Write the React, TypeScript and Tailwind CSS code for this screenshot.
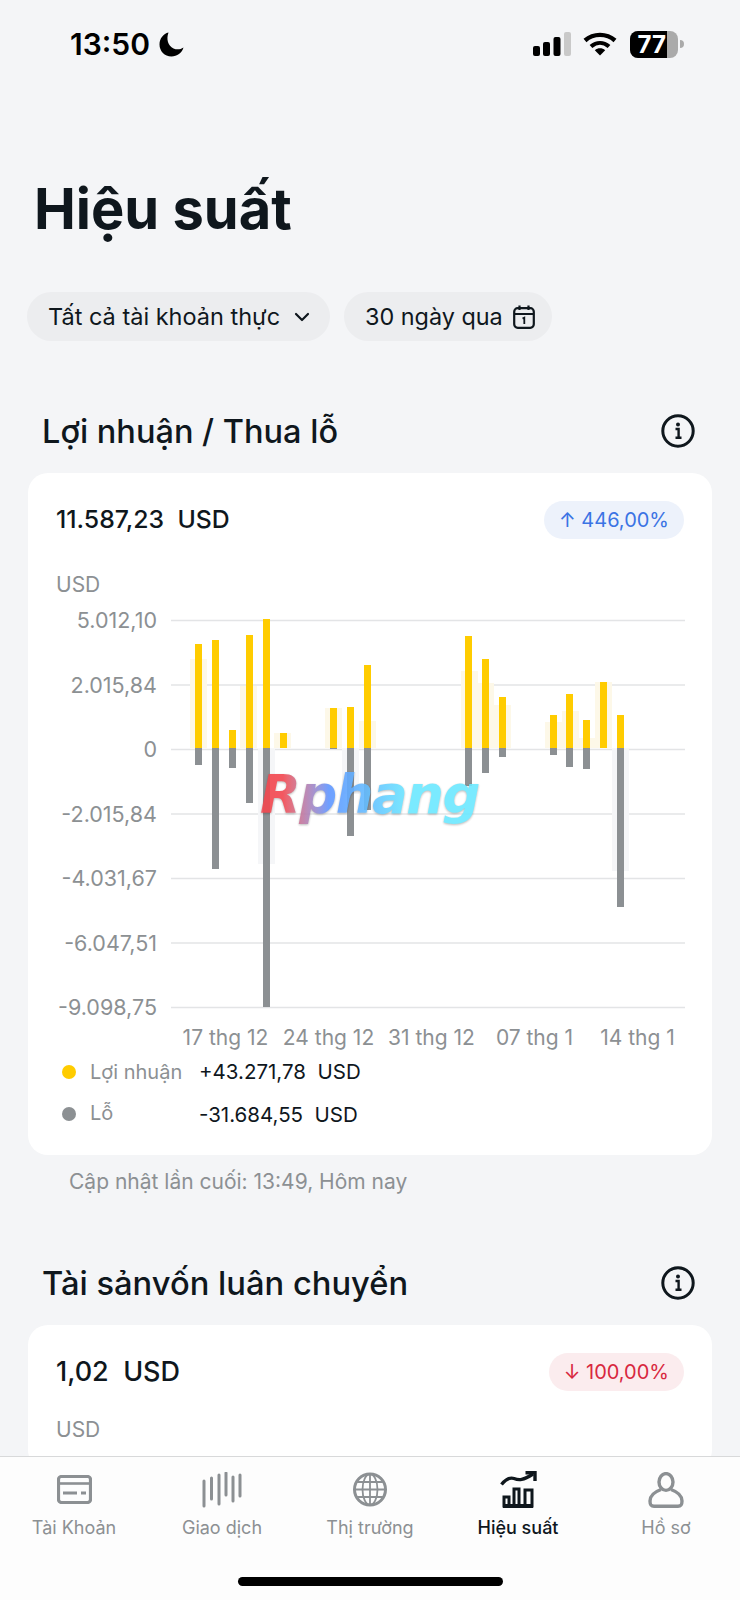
import { ChevronDown } from "lucide-react"

type Bar = { x: number; top: number; bottom?: number }
type Ghost = { x: number; y: number; h: number; neg?: boolean }

const GRID_YS = [620.5, 685, 749.5, 814, 878.5, 943, 1007.5]
const Y_LABELS = ["5.012,10", "2.015,84", "0", "-2.015,84", "-4.031,67", "-6.047,51", "-9.098,75"]
const X_LABELS = ["17 thg 12", "24 thg 12", "31 thg 12", "07 thg 1", "14 thg 1"]

const BARS: Bar[] = [
  { x: 195, top: 644, bottom: 765 },
  { x: 212, top: 640, bottom: 869 },
  { x: 229, top: 730, bottom: 768 },
  { x: 246, top: 635, bottom: 803 },
  { x: 263, top: 619, bottom: 1007 },
  { x: 280, top: 733 },
  { x: 330, top: 708, bottom: 749 },
  { x: 347, top: 707, bottom: 836 },
  { x: 364, top: 665, bottom: 810 },
  { x: 465, top: 636, bottom: 786 },
  { x: 482, top: 659, bottom: 773 },
  { x: 499, top: 697, bottom: 757 },
  { x: 550, top: 715, bottom: 755 },
  { x: 566, top: 694, bottom: 767 },
  { x: 583, top: 720, bottom: 769 },
  { x: 600, top: 682 },
  { x: 617, top: 715, bottom: 907 },
]

const GHOSTS: Ghost[] = [
  { x: 190, y: 659, h: 89 },
  { x: 240, y: 686, h: 62 },
  { x: 258, y: 749, h: 115, neg: true },
  { x: 274, y: 733, h: 15 },
  { x: 325, y: 708, h: 40 },
  { x: 342, y: 749, h: 45, neg: true },
  { x: 359, y: 721, h: 27 },
  { x: 461, y: 671, h: 77 },
  { x: 477, y: 683, h: 65 },
  { x: 494, y: 705, h: 43 },
  { x: 545, y: 722, h: 26 },
  { x: 562, y: 711, h: 37 },
  { x: 579, y: 738, h: 10 },
  { x: 595, y: 682, h: 66 },
  { x: 612, y: 749, h: 122, neg: true },
]

function StatusIcons() {
  return (
    <div className="flex items-center">
      <svg width="40" height="26" viewBox="0 0 40 26" className="mr-[11px]">
        <rect x="1" y="15" width="7" height="10" rx="2" fill="#000" />
        <rect x="11" y="11" width="7" height="14" rx="2" fill="#000" />
        <rect x="21.5" y="6" width="7" height="19" rx="2" fill="#000" />
        <rect x="32" y="1" width="7" height="24" rx="2" fill="#c9c9c9" />
      </svg>
      <svg width="34" height="24" viewBox="0 0 34 24" className="mr-[13px]">
        <path d="M2 8.5C10.5 1 23.5 1 32 8.5" fill="none" stroke="#000" strokeWidth="4.4" />
        <path d="M8 14.5C13.5 9.8 20.5 9.8 26 14.5" fill="none" stroke="#000" strokeWidth="4.2" />
        <path d="M11.8 18.2C15 15.6 19 15.6 22.2 18.2L17 23.5Z" fill="#000" />
      </svg>
      <div className="flex items-center">
        <div className="w-[48px] h-[27px] rounded-[8px] overflow-hidden flex bg-[#aaaaaa]">
          <div className="w-[37px] bg-black text-white text-[24px] leading-[27px] font-bold text-right pr-[1px]">
            77
          </div>
        </div>
        <div className="w-[4px] h-[8px] ml-[2px] rounded-r-full bg-[#aaaaaa]" />
      </div>
    </div>
  )
}

function InfoIcon() {
  return (
    <svg width="34" height="34" viewBox="0 0 34 34" fill="none">
      <circle cx="17" cy="17" r="15.2" stroke="#0f171d" strokeWidth="3" />
      <circle cx="17" cy="10.5" r="2" fill="#0f171d" />
      <path d="M14.5 15H17.6V23.5M14.5 23.8H20.5" stroke="#0f171d" strokeWidth="2.4" />
    </svg>
  )
}

function CalendarIcon() {
  return (
    <svg width="22" height="24" viewBox="0 0 22 24" fill="none" className="ml-[10px]">
      <rect x="1.2" y="3.2" width="19.6" height="19.6" rx="3.5" stroke="#0f171d" strokeWidth="2.2" />
      <path d="M1.5 9H20.5M6.5 0.5V5M15.5 0.5V5" stroke="#0f171d" strokeWidth="2.2" />
      <path d="M9.5 13.5L11.3 12.6V19" stroke="#0f171d" strokeWidth="1.8" />
    </svg>
  )
}

function CardIcon() {
  return (
    <svg width="35" height="29" viewBox="0 0 35 29" fill="none">
      <rect x="1.5" y="1.5" width="32" height="26" rx="3" stroke="#8c9093" strokeWidth="3.2" />
      <path d="M2 8.5H33" stroke="#8c9093" strokeWidth="2.6" />
      <path d="M6 18H20M24 18H29" stroke="#8c9093" strokeWidth="3" />
    </svg>
  )
}

function WaveIcon() {
  return (
    <svg width="40" height="36" viewBox="0 0 40 36" fill="none" stroke="#8c9093" strokeWidth="3" strokeLinecap="round">
      <path d="M2 9V34M9.5 6V27M17 3V32M24 1V23M31 5V29M38 3V24" />
    </svg>
  )
}

function GlobeIcon() {
  return (
    <svg width="34" height="35" viewBox="0 0 34 35" fill="none" stroke="#8c9093">
      <circle cx="17" cy="17.5" r="15.5" strokeWidth="3" />
      <ellipse cx="17" cy="17.5" rx="7.5" ry="15.5" strokeWidth="1.8" />
      <path d="M17 2V33M2 17.5H32M4 10H30M4 25H30" strokeWidth="1.8" />
    </svg>
  )
}

function PerformanceIcon() {
  return (
    <svg width="37" height="37" viewBox="0 0 37 37" fill="none" stroke="#0f171d">
      <path d="M1.5 13.5C6 8 9.5 6 14 7.5C19 9.5 23 9.5 33 3" strokeWidth="3.4" />
      <path d="M25.5 1.8H35V10" strokeWidth="3.4" />
      <path d="M3 35H33" strokeWidth="4" />
      <rect x="4" y="26" width="5" height="9" strokeWidth="3" />
      <rect x="14" y="18" width="5" height="17" strokeWidth="3" />
      <rect x="25" y="19" width="7" height="16" strokeWidth="3" />
    </svg>
  )
}

function PersonIcon() {
  return (
    <svg width="36" height="36" viewBox="0 0 36 36" fill="none" stroke="#8c9093" strokeWidth="3.4">
      <ellipse cx="18" cy="10" rx="7" ry="8.4" />
      <path d="M13 17.5C6 20 2 24 2 29C2 33 3 34.3 6 34.3H30C33 34.3 34 33 34 29C34 24 30 20 23 17.5" />
    </svg>
  )
}

function ChangeBadge({ text, down }: { text: string; down?: boolean }) {
  return (
    <div
      className={
        down
          ? "h-[38px] px-[15px] rounded-[19px] flex items-center bg-[#fbecee] text-[#d8283f] text-[20px]"
          : "h-[38px] px-[15px] rounded-[19px] flex items-center bg-[#edf2fb] text-[#3b74e4] text-[20px]"
      }
    >
      {text}
    </div>
  )
}

function NavItem({ label, icon, active }: { label: string; icon: React.ReactNode; active?: boolean }) {
  return (
    <div className="flex flex-col items-center">
      <div className="h-[37px] flex items-center justify-center">{icon}</div>
      <div
        className={
          active
            ? "mt-[8px] h-[24px] leading-[24px] text-[18px] font-medium text-[#0f171d]"
            : "mt-[8px] h-[24px] leading-[24px] text-[18px] text-[#8c9093]"
        }
      >
        {label}
      </div>
    </div>
  )
}

export default function App() {
  return (
    <div className="w-[740px] h-[1600px] flex flex-col overflow-hidden bg-[#f4f5f7] text-[#0f171d] font-['Inter',sans-serif]">
      <main className="flex-1 overflow-hidden">
        {/* Status bar */}
        <div className="h-[57px] pt-[31px] pl-[70px] pr-[56px] flex items-center justify-between">
          <div className="flex items-center">
            <span className="text-[30px] leading-[27px] font-semibold text-black">13:50</span>
            <svg width="25" height="25" viewBox="0 0 25 25" className="ml-[9px]">
              <path d="M9.5 0.5C7 7 9 14 14.5 16.5C18 18 21.5 17.5 24.5 15.5C23 21 18 24.5 12.5 24.5C5.5 24.5 0.5 19 0.5 12.5C0.5 6.5 4.5 1.5 9.5 0.5Z" fill="#000" />
            </svg>
          </div>
          <StatusIcons />
        </div>

        <h1 className="mt-[118px] ml-[34px] h-[68px] leading-[68px] text-[56px] font-bold">
          Hiệu suất
        </h1>

        {/* Filters */}
        <div className="mt-[49px] ml-[27px] flex gap-[14px]">
          <div className="h-[49px] w-[303px] pl-[21px] rounded-[25px] bg-[#ecedef] flex items-center text-[23.5px]">
            Tất cả tài khoản thực
            <ChevronDown size={24} strokeWidth={2.2} className="ml-[10px]" />
          </div>
          <div className="h-[49px] w-[208px] pl-[21px] rounded-[25px] bg-[#ecedef] flex items-center text-[23.4px]">
            30 ngày qua
            <CalendarIcon />
          </div>
        </div>

        {/* Profit / loss */}
        <div className="mt-[73px] ml-[42px] mr-[45px] h-[34px] flex items-center justify-between">
          <h2 className="pt-[2px] text-[32.5px] font-medium">Lợi nhuận / Thua lỗ</h2>
          <InfoIcon />
        </div>

        <section className="mt-[25px] mx-[28px] px-[28px] pt-[28px] pb-[27px] rounded-[20px] bg-white">
          <div className="h-[38px] flex items-center justify-between">
            <div className="text-[24.8px] font-medium whitespace-pre">11.587,23  USD</div>
            <ChangeBadge text="↑ 446,00%" />
          </div>
          <div className="mt-[33px] h-[26px] leading-[26px] text-[21px] text-[#8c9093]">USD</div>

          <div className="relative mt-[9px] flex h-[413px]">
            <div className="w-[101px] shrink-0 flex flex-col justify-between items-end text-[21.5px] leading-[26px] text-[#8c9093]">
              {Y_LABELS.map((label) => (
                <div key={label}>{label}</div>
              ))}
            </div>
            <svg width="514" height="413" viewBox="171 607 514 413" className="ml-[14px] shrink-0">
              {GRID_YS.map((y) => (
                <line key={y} x1="171" x2="685" y1={y} y2={y} stroke="#e3e4e6" strokeWidth="1.6" />
              ))}
              {GHOSTS.map((g) => (
                <rect key={g.x} x={g.x} y={g.y} width="17" height={g.h} fill={g.neg ? "#f5f6f8" : "#fdf8e8"} />
              ))}
              {BARS.map((b) => (
                <g key={b.x}>
                  {b.bottom && <rect x={b.x} y="748" width="7" height={b.bottom - 748} fill="#8c9093" />}
                  <rect x={b.x} y={b.top} width="7" height={748 - b.top} fill="#ffcc00" />
                </g>
              ))}
            </svg>
            {/* Watermark over the chart */}
            <div className="absolute left-[204px] top-[153px] pr-[10px] text-[53px] leading-[70px] tracking-[-1.5px] font-bold italic opacity-90 bg-gradient-to-r from-[#f2474f] from-10% via-[#5f95ff] via-30% to-[#6ce8ff] to-65% bg-clip-text text-transparent drop-shadow-[0_1px_1px_rgba(0,0,0,0.3)] font-['DejaVu_Sans',sans-serif]">
              Rphang
            </div>
          </div>

          <div className="mt-[5px] ml-[118px] w-[515px] grid grid-cols-5 text-center text-[21px] leading-[26px] text-[#8c9093] whitespace-nowrap">
            {X_LABELS.map((label) => (
              <div key={label}>{label}</div>
            ))}
          </div>

          <div className="mt-[8px] ml-[6px] flex items-center h-[26px] text-[20.5px]">
            <div className="w-[14px] h-[14px] rounded-full bg-[#ffcc00]" />
            <div className="ml-[14px] w-[109px] text-[20px] text-[#8c9093]">Lợi nhuận</div>
            <div className="whitespace-pre text-[#0f171d]">+43.271,78  USD</div>
          </div>
          <div className="mt-[17px] ml-[6px] flex items-center h-[26px] text-[20.5px]">
            <div className="w-[14px] h-[14px] rounded-full bg-[#8c9093] -mt-[3px]" />
            <div className="ml-[14px] w-[109px] text-[20px] text-[#8c9093] -mt-[5px]">Lỗ</div>
            <div className="whitespace-pre text-[#0f171d]">-31.684,55  USD</div>
          </div>
        </section>

        <div className="mt-[14px] ml-[69px] h-[26px] leading-[26px] text-[21px] text-[#8c9093]">
          Cập nhật lần cuối: 13:49, Hôm nay
        </div>

        {/* Turnover */}
        <div className="mt-[71px] ml-[42px] mr-[45px] h-[34px] flex items-center justify-between">
          <h2 className="pt-[2px] text-[32.7px] font-medium">Tài sảnvốn luân chuyển</h2>
          <InfoIcon />
        </div>

        <section className="mt-[25px] mx-[28px] px-[28px] pt-[28px] pb-[27px] rounded-[20px] bg-white">
          <div className="h-[38px] flex items-center justify-between">
            <div className="text-[27px] font-medium whitespace-pre">1,02  USD</div>
            <ChangeBadge text="↓ 100,00%" down />
          </div>
          <div className="mt-[26px] h-[26px] leading-[26px] text-[21px] text-[#8c9093]">USD</div>
        </section>
      </main>

      {/* Tab bar */}
      <nav className="h-[144px] shrink-0 border-t-[1.5px] border-[#d8d9da] bg-[#fdfdfd] pt-[14px]">
        <div className="grid grid-cols-5">
          <NavItem label="Tài Khoản" icon={<CardIcon />} />
          <NavItem label="Giao dịch" icon={<WaveIcon />} />
          <NavItem label="Thị trường" icon={<GlobeIcon />} />
          <NavItem label="Hiệu suất" icon={<PerformanceIcon />} active />
          <NavItem label="Hồ sơ" icon={<PersonIcon />} />
        </div>
        <div className="mt-[37px] mx-auto w-[265px] h-[9px] rounded-full bg-black" />
      </nav>
    </div>
  )
}
